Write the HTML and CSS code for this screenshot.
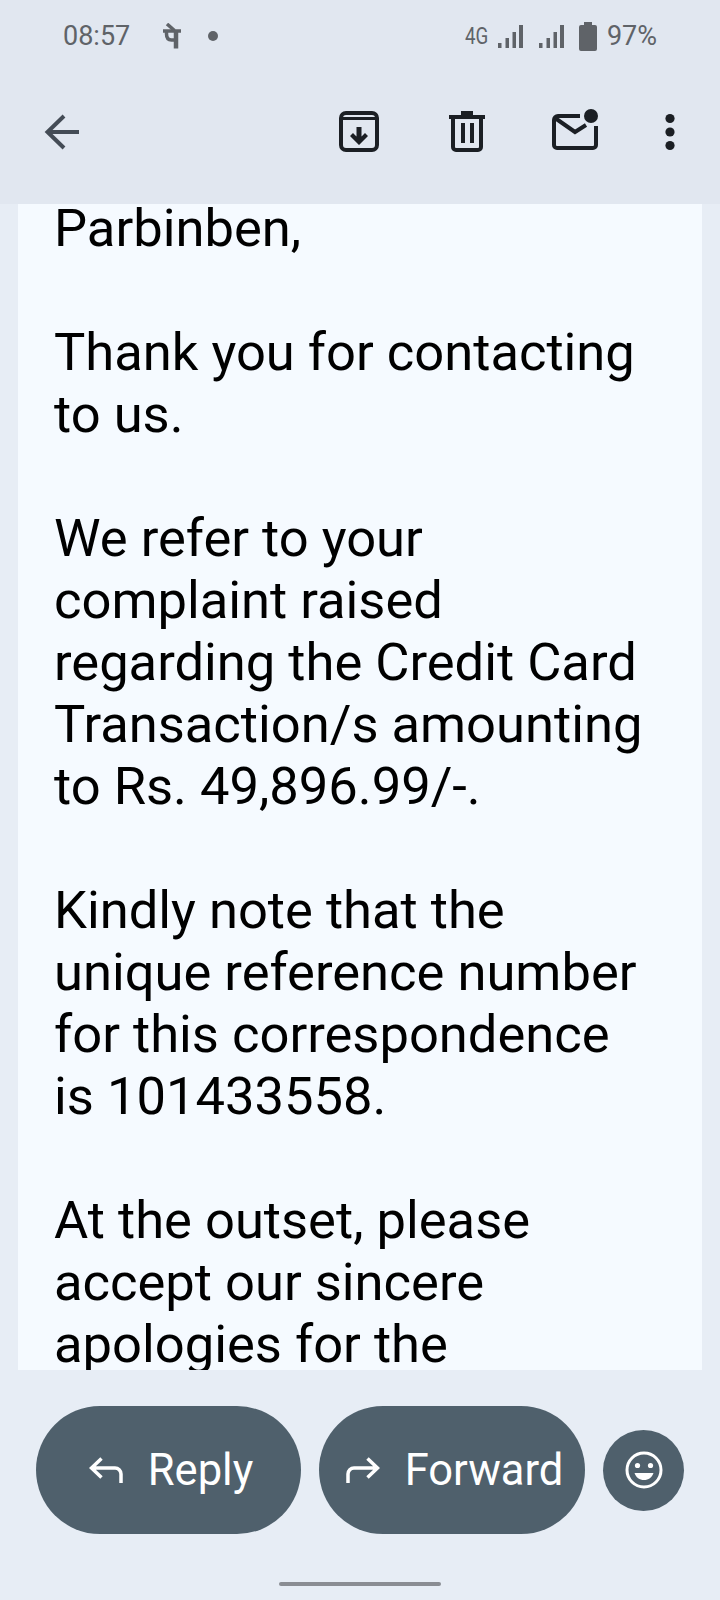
FILE: index.html
```html
<!DOCTYPE html>
<html lang="en">
<head>
    <meta charset="UTF-8">
    <meta name="viewport" content="width=device-width, initial-scale=1.0">
    <title>Message</title>
    <link rel="stylesheet" href="styles.css">
</head>
<body>
    <div class="status-bar">
        <span class="time">08:57</span>
        <svg class="phonepe" width="18" height="26" viewBox="0 0 18 26" fill="none" stroke="#5f6368"><path d="M0 8h18" stroke-width="3.500"/><path d="M13 7v18.500" stroke-width="4.500"/><path d="M3.500 8v3c0 4 2 6 5 6h4" stroke-width="3.500"/><path d="M4 1l7.500 6.500" stroke-width="3.500"/></svg>
        <span class="dot"></span>
        <span class="status-right">
            <span class="net">4G</span>
            <svg class="signal" width="25" height="23" viewBox="0 0 25 23" fill="#5f6368"><path d="M0 18h3.500v5H0zM7.500 13H11v10H7.500zM14.500 7H18v16h-3.500zM21 0h4v23h-4z"/></svg>
            <svg class="signal" width="25" height="23" viewBox="0 0 25 23" fill="#5f6368"><path d="M0 18h3.500v5H0zM7.500 13H11v10H7.500zM14.500 7H18v16h-3.500zM21 0h4v23h-4z"/></svg>
            <svg class="battery" width="18" height="29" viewBox="0 0 18 29"><path d="M5 0h8v3h3a2 2 0 0 1 2 2v22a2 2 0 0 1-2 2H2a2 2 0 0 1-2-2V5a2 2 0 0 1 2-2h3z" fill="#5f6368"/></svg>
            <span class="percent">97%</span>
        </span>
    </div>

    <div class="toolbar">
        <svg width="36" height="36" viewBox="0 0 36 36" fill="none" stroke="#444c56" stroke-width="4"><path d="M35 18H4M20 2L3.500 18 20 34"/></svg>
        <div class="actions">
            <svg class="archive" width="40" height="45" viewBox="0 -2 40 45" fill="none" stroke="#1b1f24"><rect x="2" y="2" width="36" height="37" rx="5" stroke-width="4"/><path d="M2 7.500h36" stroke-width="3"/><path d="M17.500 16h5v9.500l3.500-3.500 3 3-9 9-9-9 3-3 3.500 3.500z" fill="#1b1f24" stroke="none"/></svg>
            <svg width="36" height="45" viewBox="0 -2 36 45" fill="none" stroke="#1b1f24"><path d="M4 6v30a3 3 0 0 0 3 3h22a3 3 0 0 0 3-3V6" stroke-width="4"/><path d="M12 0h12v4h12v4H0V4h12z" fill="#1b1f24" stroke="none"/><path d="M12 12h4v20h-4zM21 12h4v20h-4z" fill="#1b1f24" stroke="none"/></svg>
            <svg width="46" height="45" viewBox="0 0 46 45" fill="none" stroke="#1b1f24" stroke-width="4"><path d="M28 7H6a4 4 0 0 0-4 4v25a3 3 0 0 0 3 3h36a3 3 0 0 0 3-3V17"/><path d="M3 9l20 14 11-7"/><circle cx="39" cy="7" r="7" fill="#1b1f24" stroke="none"/></svg>
            <svg width="10" height="45" viewBox="0 -5 10 45" fill="#1b1f24"><circle cx="5" cy="4.500" r="4.600"/><circle cx="5" cy="18" r="4.600"/><circle cx="5" cy="31.500" r="4.600"/></svg>
        </div>
    </div>

    <div class="message">
        <div class="message-text">
            <p>Parbinben,</p>
            <p>Thank you for contacting<br>to us.</p>
            <p>We refer to your<br>complaint raised<br>regarding the Credit Card<br>Transaction/s amounting<br>to Rs. 49,896.99/-.</p>
            <p>Kindly note that the<br>unique reference number<br>for this correspondence<br>is 101433558.</p>
            <p>At the outset, please<br>accept our sincere<br>apologies for the</p>
        </div>
    </div>

    <div class="reply-bar">
        <button class="pill">
            <svg width="34" height="26" viewBox="0 0 34 26" fill="none" stroke="#fff" stroke-width="3.500"><path d="M12.500 1.500L2.500 11l10 9.500M2.500 11H26a6 6 0 0 1 6 6v9"/></svg>
            Reply
        </button>
        <button class="pill">
            <svg width="34" height="26" viewBox="0 0 34 26" fill="none" stroke="#fff" stroke-width="3.500"><path d="M21.500 1.500l10 9.500-10 9.500M31.500 11H8a6 6 0 0 0-6 6v9"/></svg>
            Forward
        </button>
        <button class="round">
            <svg width="38" height="38" viewBox="0 0 38 38"><circle cx="19" cy="19" r="17" fill="none" stroke="#fff" stroke-width="3"/><circle cx="12.500" cy="14.500" r="2.600" fill="#fff"/><circle cx="25.500" cy="14.500" r="2.600" fill="#fff"/><path d="M9.500 22h19c-1.500 4.500-5 7-9.500 7s-8-2.500-9.500-7z" fill="#fff"/></svg>
        </button>
    </div>

    <div class="home-bar"><span></span></div>
</body>
</html>
```

FILE: styles.css
```css
* {
    box-sizing: border-box;
}

body {
    margin: 0;
    width: 720px;
    height: 1600px;
    overflow: hidden;
    background-color: #e7edf5;
    font-family: Roboto, sans-serif;
}

.status-bar {
    display: flex;
    align-items: center;
    height: 72px;
    background-color: #e1e7f0;
    padding: 0 63px 0 63px;
    color: #5f6368;
    font-size: 27px;
}

.phonepe {
    margin-left: 33px;
}

.dot {
    width: 10px;
    height: 10px;
    margin-left: 27px;
    border-radius: 50%;
    background-color: #5f6368;
}

.status-right {
    display: flex;
    align-items: center;
    margin-left: auto;
}

.net {
    width: 23px;
    margin-right: 10px;
    font-size: 24px;
    white-space: nowrap;
    transform: scaleX(0.78);
    transform-origin: left center;
}

.signal {
    margin-right: 16px;
}

.signal + .battery {
    margin-left: -1px;
}

.percent {
    margin-left: 10px;
}

.toolbar {
    display: flex;
    align-items: center;
    justify-content: space-between;
    height: 132px;
    padding: 0 45px 13px 44px;
    background-color: #e1e7f0;
}

.actions {
    display: flex;
    align-items: center;
    gap: 67px;
}

.archive {
    margin-right: 3px;
}

.message {
    height: 1166px;
    margin: 0 18px;
    padding: 0 0 0 36px;
    overflow: hidden;
    background-color: #f5faff;
    color: #000;
    font-size: 52.5px;
    line-height: 62px;
}

.message-text {
    margin-top: -7px;
}

.message-text p {
    margin: 0 0 62px;
}

.reply-bar {
    display: flex;
    align-items: center;
    gap: 18px;
    padding: 36px 36px 0;
}

.pill {
    display: flex;
    align-items: center;
    justify-content: center;
    gap: 25px;
    width: 265px;
    height: 128px;
    padding: 0 0 0 5px;
    border: 0;
    border-radius: 64px;
    background-color: #4f606c;
    color: #fff;
    font-family: Roboto, sans-serif;
    font-size: 43.5px;
}

.pill + .pill {
    width: 266px;
}

.round {
    display: flex;
    align-items: center;
    justify-content: center;
    width: 81px;
    height: 81px;
    padding: 0;
    border: 0;
    border-radius: 50%;
    background-color: #4f606c;
}

.home-bar {
    display: flex;
    justify-content: center;
    padding-top: 48px;
}

.home-bar span {
    width: 162px;
    height: 4px;
    border-radius: 2px;
    background-color: #8a8d93;
}
```
